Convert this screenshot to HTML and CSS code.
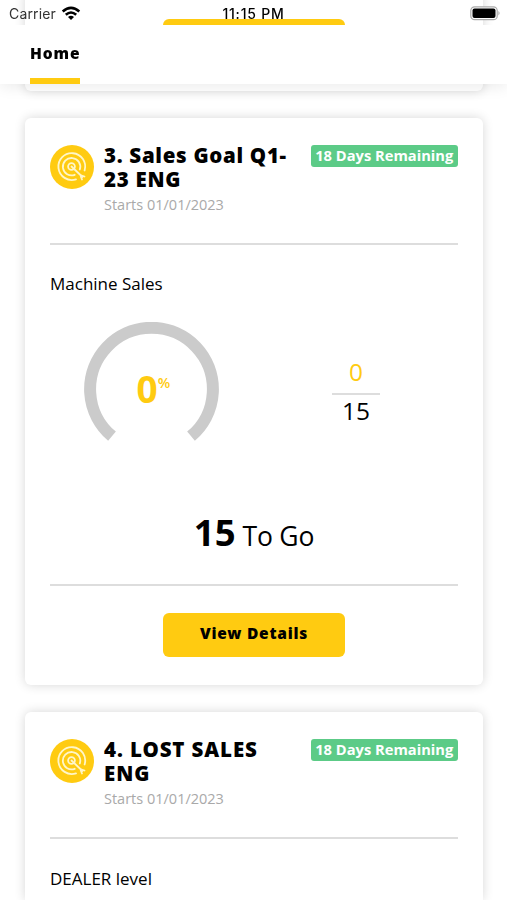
FILE: index.html
```html
<!DOCTYPE html>
<html lang="en">
<head>
<meta charset="utf-8">
<title>Home</title>
<link rel="stylesheet" href="styles.css">
</head>
<body>
<svg width="0" height="0" class="defs">
  <symbol id="target" viewBox="0 0 44 44">
    <circle cx="22" cy="22" r="22" fill="#ffcb11"/>
    <g fill="none" stroke="#fff6c8" stroke-width="1.8" stroke-linecap="round">
      <path d="M34.6 25.5A13.4 13.4 0 1 0 26 34.3"/>
      <path d="M29.8 24.5A8.7 8.7 0 1 0 24.7 29.8"/>
      <circle cx="21.5" cy="21.5" r="3.4"/>
      <path d="M21.5 21.5L32.5 32M30.8 31.5L32 34.5M31.5 30.5L34.5 31.5"/>
    </g>
  </symbol>
</svg>

<div class="status">
  <div class="carrier"><span>Carrier</span>
    <svg width="20" height="15" viewBox="0 0 20 15"><g fill="none" stroke="#000" stroke-width="2.6"><path d="M1.7 5.4Q10-1.8 18.3 5.4"/><path d="M4.8 8.8Q10 4.2 15.2 8.8"/></g><path d="M10 14L7 11Q10 8.5 13 11Z"/></svg>
  </div>
  <div class="clock">11:15 PM</div>
  <svg class="battery" width="31" height="15" viewBox="0 0 31 15"><rect x=".8" y=".8" width="26.4" height="12.9" rx="3.8" fill="#fff" stroke="#aaa" stroke-width="1.2"/><rect x="2.5" y="2.5" width="23" height="9.5" rx="2" fill="#000"/><path d="M28.5 5Q30.5 7.2 28.5 9.5Z" fill="#999"/></svg>
</div>
<nav class="tabs"><a class="tab">Home</a></nav>

<main class="list">
  <section class="card">
    <footer class="card-foot first"><button class="details">View Details</button></footer>
  </section>

  <section class="card">
    <header class="card-head">
      <svg class="icon"><use href="#target"/></svg>
      <div class="heading">
        <h2>3. Sales Goal Q1-<wbr>23 ENG</h2>
        <p>Starts 01/01/2023</p>
      </div>
      <span class="badge">18 Days Remaining</span>
    </header>
    <h3 class="metric">Machine Sales</h3>
    <div class="stats">
      <div class="gauge">
        <svg width="136" height="136" viewBox="0 0 136 136"><path d="M28 114.2A61.4 61.4 0 1 1 107 114.2" fill="none" stroke="#cbcbcb" stroke-width="12"/></svg>
        <div class="percent">0<sup>%</sup></div>
      </div>
      <div class="ratio"><span class="done">0</span><span class="goal">15</span></div>
    </div>
    <div class="togo"><b>15</b> <span>To Go</span></div>
    <footer class="card-foot"><button class="details">View Details</button></footer>
  </section>

  <section class="card last">
    <header class="card-head">
      <svg class="icon"><use href="#target"/></svg>
      <div class="heading">
        <h2 class="caps">4. LOST SALES ENG</h2>
        <p>Starts 01/01/2023</p>
      </div>
      <span class="badge">18 Days Remaining</span>
    </header>
    <h3 class="metric">DEALER level</h3>
  </section>
</main>
</body>
</html>
```
FILE: styles.css
```css
* { box-sizing: border-box; }
html, body { height: 100%; }
body { margin: 0; overflow: hidden; background: #fff; color: #000; font-family: "Open Sans", "Noto Sans", sans-serif; }
h2, h3, p { margin: 0; }
.defs { position: absolute; }

.status { position: fixed; inset: 0 0 auto; height: 25px; z-index: 3; font-family: Inter, sans-serif; font-size: 14px; line-height: 17px; }
.carrier { position: absolute; left: 9px; top: 5px; display: flex; gap: 5px; color: #333; letter-spacing: .15px; }
.carrier svg { margin-top: 1px; }
.clock { position: absolute; left: 0; right: 0; top: 5px; text-align: center; font-weight: 500; letter-spacing: .8px; }
.battery { position: absolute; right: 6px; top: 6px; }

.tabs { position: fixed; inset: 25px 0 auto; height: 59px; z-index: 2; padding-left: 30px; background: #fff; box-shadow: 0 3px 14px rgba(0,0,0,.08); clip-path: inset(0 0 -20px); }
.tab { display: block; width: 50px; height: 59px; padding-top: 17px; border-bottom: 6px solid #ffcb11; font-family: "Noto Sans", sans-serif; font-size: 15.5px; line-height: 22px; font-weight: 900; letter-spacing: .9px; white-space: nowrap; }

.list { display: flex; flex-direction: column; gap: 27px; height: calc(100% + 10px); margin-top: -10px; padding: 0 24px 0 25px; }
.card { flex: none; padding: 0 25px; border-radius: 6px; background: #fff; box-shadow: 0 0 11px rgba(0,0,0,.16); }
.card.last { flex: 1; border-radius: 6px 6px 0 0; }
.card-head { display: flex; height: 127px; padding-top: 27px; border-bottom: 2px solid #ddd; }
.icon { flex: none; width: 44px; height: 44px; }
.heading { flex: 1; min-width: 0; margin-left: 10px; }
h2 { max-width: 190px; font-family: "Noto Sans", sans-serif; font-size: 20.5px; line-height: 24px; font-weight: 900; letter-spacing: .7px; margin-top: -2px; }
h2.caps { letter-spacing: .9px; }
.heading p { margin-top: 4px; color: #a9a9a9; font-size: 14.5px; line-height: 20px; }
.badge { flex: none; width: 147.5px; height: 22px; border-radius: 3px; background: #5ccb87; color: #fff; font-size: 14.7px; line-height: 21px; font-weight: 700; text-align: center; white-space: nowrap; }
.metric { margin-top: 28px; font-size: 17px; line-height: 22px; font-weight: 400; }
.last .metric { margin-top: 29px; }
.stats { display: flex; margin-top: 27px; }
.gauge { position: relative; width: 136px; height: 136px; margin-left: 34px; }
.percent { position: absolute; left: 52.5px; top: 43px; color: #ffcb11; font-size: 37px; line-height: 48px; font-weight: 700; white-space: nowrap; }
.percent sup { font-size: 14.5px; line-height: 14px; font-weight: 600; vertical-align: 15px; }
.ratio { width: 48px; margin: 38px 0 0 112px; display: flex; flex-direction: column; text-align: center; font-size: 24.5px; line-height: 34px; font-weight: 400; }
.done { height: 35px; color: #ffcb11; border-bottom: 2px solid #ddd; line-height: 24px; }
.goal { line-height: 32px; }
.togo { height: 55px; margin-top: 50px; text-align: center; font-size: 26.5px; line-height: 48px; }
.togo b { font-size: 36.5px; }
.togo span { font-weight: 400; letter-spacing: -.2px; }
.card-foot { height: 101px; margin-top: 21px; padding-top: 27px; border-top: 2px solid #ddd; text-align: center; }
.card-foot.first { margin-top: 0; }
.details { width: 182px; height: 44px; border: 0; border-radius: 6px; padding: 0 0 4px; background: #ffcb11; font: 900 15.5px "Noto Sans", sans-serif; letter-spacing: .75px; }
```
